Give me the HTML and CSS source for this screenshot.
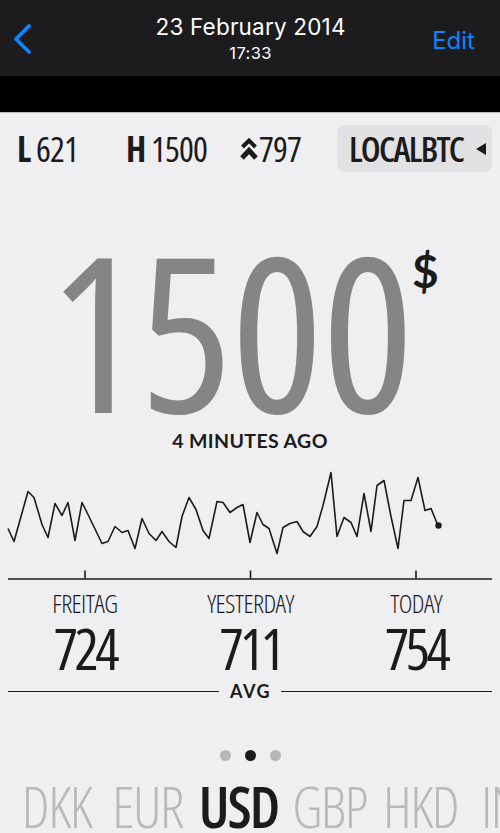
FILE: index.html
```html
<!DOCTYPE html>
<html lang="en">
<head>
<meta charset="utf-8">
<title>Price</title>
<link rel="stylesheet" href="styles.css">
</head>
<body>
<header class="nav">
  <svg class="back" width="20" height="30" viewBox="0 0 20 30"><polyline points="17,2 4,15 17,28" fill="none" stroke="#0a84ff" stroke-width="3.8" stroke-linecap="round" stroke-linejoin="round"/></svg>
  <div class="title">
    <div class="date">23 February 2014</div>
    <div class="time">17:33</div>
  </div>
  <div class="edit">Edit</div>
</header>
<div class="band"></div>
<main class="content">
  <section class="stats">
    <div class="stat s-low"><b>L</b> 621</div>
    <div class="stat s-high"><b>H</b> 1500</div>
    <div class="stat s-vol"><svg class="chev" width="18" height="25" viewBox="0 0 18 25"><polyline points="2.5,11 9,4.5 15.5,11" fill="none" stroke="#1b1b1b" stroke-width="4"/><polyline points="2,22 9,14.5 16,22" fill="none" stroke="#1b1b1b" stroke-width="5"/></svg>797</div>
    <div class="pill"><span class="market">LOCALBTC</span><span class="tri"></span></div>
  </section>
  <section class="price">
    <span class="big">1500</span><span class="cur">$</span>
  </section>
  <div class="ago">4 MINUTES AGO</div>
  <svg class="chart" width="500" height="130" viewBox="0 454.5 500 130">
    <polyline fill="none" stroke="#1b1b1b" stroke-width="1.6" stroke-linejoin="round" points="8,529 14,542 28,492 34,498 42,525 48,538 55,504 62,516 68,503 75,541 82,503 88,515 102,544 108,542 115,527 122,533 128,531 135,549 142,519 149,534 156,541 162,532 169,542 176,548 182,517 189,498 196,510 203,531 209,539 217,502 223,503 230,513 237,508 243,505 250,543 257,513 263,525 269,529 277,554 283,528 290,524 297,522 303,532 310,537 317,527 323,506 331,473 337,537 344,518 351,523 357,537 364,494 371,532 377,486 384,481 391,517 398,549 404,501 411,501 418,478 425,511 431,509 438,526"/>
    <circle cx="438.5" cy="526" r="3.2" fill="#1b1b1b"/>
    <line x1="8" y1="579.5" x2="492" y2="579.5" stroke="#1b1b1b" stroke-width="1.6"/>
    <line x1="85" y1="571" x2="85" y2="579" stroke="#1b1b1b" stroke-width="1.6"/>
    <line x1="250.5" y1="571" x2="250.5" y2="579" stroke="#1b1b1b" stroke-width="1.6"/>
    <line x1="416" y1="571" x2="416" y2="579" stroke="#1b1b1b" stroke-width="1.6"/>
  </svg>
  <section class="days">
    <div class="day"><div class="day-name">FREITAG</div><div class="day-val">724</div></div>
    <div class="day"><div class="day-name">YESTERDAY</div><div class="day-val">711</div></div>
    <div class="day"><div class="day-name">TODAY</div><div class="day-val">754</div></div>
  </section>
  <div class="avg"><span class="rule"></span><span class="avg-text">AVG</span><span class="rule"></span></div>
  <div class="dots"><span class="dot"></span><span class="dot on"></span><span class="dot"></span></div>
  <nav class="currencies">
    <span class="ccy">DKK</span>
    <span class="ccy">EUR</span>
    <span class="ccy active">USD</span>
    <span class="ccy">GBP</span>
    <span class="ccy">HKD</span>
    <span class="ccy">INR</span>
  </nav>
</main>
</body>
</html>
```
FILE: styles.css
```css
html, body { margin: 0; padding: 0; }
body {
  width: 500px;
  height: 833px;
  overflow: hidden;
  background: #efeef0;
  font-family: "Open Sans", sans-serif;
  color: #1b1b1b;
}
.nav {
  height: 76px;
  background: #1c1c1e;
  display: flex;
  align-items: center;
  justify-content: space-between;
  padding: 0 25px 0 12px;
  box-sizing: border-box;
  font-family: Inter, "Noto Sans", sans-serif;
}
.back { margin-top: 1px; }
.title { text-align: center; color: #fff; margin-left: 37px; }
.date { font-size: 22.5px; line-height: 27px; letter-spacing: 0.2px; }
.time { font-size: 16.5px; line-height: 20px; margin-top: 3px; letter-spacing: 0.4px; }
.edit { color: #0a84ff; font-size: 24px; line-height: 28px; margin-top: 5px; }
.band { height: 36px; background: #000; border-bottom: 1px solid #bdbcbf; }

.content { display: flex; flex-direction: column; }

.stats {
  height: 87px;
  padding-top: 12px;
  box-sizing: border-box;
  display: flex;
  align-items: flex-start;
  font-stretch: 75%;
  font-size: 35px;
}
.stat {
  flex-shrink: 0;
  height: 47px;
  display: flex;
  align-items: center;
  font-weight: 500;
  letter-spacing: -0.9px;
  white-space: pre;
}
.stat b { font-weight: 700; }
.s-low { width: 126px; padding-left: 17px; box-sizing: border-box; }
.s-high { width: 114px; }
.s-vol { width: 97px; }
.chev { margin-right: 1px; }
.pill {
  flex-shrink: 0;
  width: 155px;
  height: 47px;
  background: #e2e1e3;
  border-radius: 8px;
  display: flex;
  align-items: center;
  padding-left: 12px;
  box-sizing: border-box;
}
.market { font-weight: 600; letter-spacing: -1.7px; }
.tri {
  width: 0; height: 0;
  margin-left: 13px;
  border-top: 6.5px solid transparent;
  border-bottom: 6.5px solid transparent;
  border-right: 10px solid #1b1b1b;
}

.price {
  margin-top: 39.2px;
  height: 180px;
  display: flex;
  justify-content: center;
  align-items: flex-start;
  padding-right: 12px;
}
.big {
  font-size: 216px;
  line-height: 180px;
  font-weight: 400;
  font-stretch: 85%;
  letter-spacing: -1px;
  color: #858487;
}
.cur {
  font-family: Lato, sans-serif;
  font-weight: 700;
  font-size: 46px;
  line-height: 46px;
  margin-top: 9px;
  margin-left: -1px;
  color: #1b1b1b;
}
.ago {
  margin-top: 9.3px;
  height: 26px;
  text-align: center;
  font-family: Lato, sans-serif;
  font-weight: 700;
  font-size: 19.5px;
  line-height: 25px;
  letter-spacing: 0.4px;
}
.chart { display: block; }

.days {
  display: grid;
  grid-template-columns: repeat(3, 1fr);
  padding: 0 1px 0 2px;
  margin-top: 3.4px;
  text-align: center;
  font-stretch: 75%;
}
.day-name {
  font-size: 26px;
  line-height: 30px;
  font-weight: 300;
  letter-spacing: -0.6px;
}
.day-val {
  margin-top: 0.3px;
  font-size: 57px;
  line-height: 60px;
  font-weight: 500;
  letter-spacing: -3.5px;
}
.avg {
  margin-top: 3.2px;
  height: 20px;
  display: flex;
  align-items: center;
  padding: 0 8px;
}
.rule { flex: 1; height: 1.6px; background: #1b1b1b; }
.avg-text {
  font-family: Lato, sans-serif;
  font-weight: 700;
  font-size: 18px;
  line-height: 20px;
  letter-spacing: 1.5px;
  padding: 0 10px 0 11px;
}
.dots {
  margin-top: 49px;
  height: 11px;
  display: flex;
  justify-content: center;
  gap: 14px;
}
.dot { width: 11px; height: 11px; border-radius: 50%; background: #b6b5b7; }
.dot.on { background: #1b1b1b; }
.currencies {
  margin-top: 22px;
  height: 46px;
  display: grid;
  grid-template-columns: repeat(6, 91px);
  padding-left: 11px;
  white-space: nowrap;
  font-size: 57px;
  line-height: 46px;
  font-stretch: 75%;
  font-weight: 300;
  color: #b9b8ba;
  letter-spacing: -1.5px;
}
.ccy { text-align: center; }
.ccy.active { color: #1b1b1b; font-weight: 600; letter-spacing: -2px; }
```
